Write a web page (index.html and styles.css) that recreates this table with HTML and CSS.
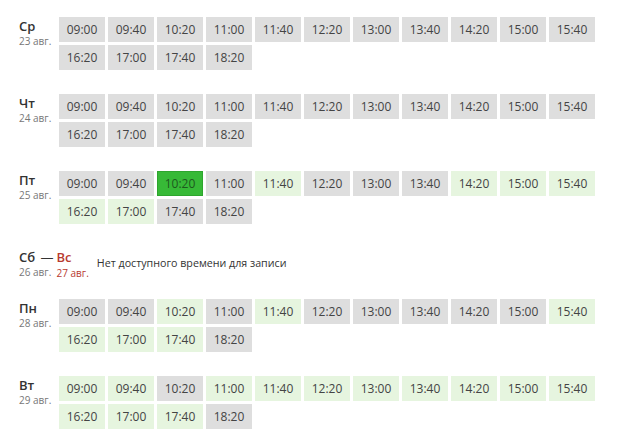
FILE: index.html
```html
<!DOCTYPE html>
<html lang="ru">
<head>
<meta charset="utf-8">
<link rel="stylesheet" href="styles.css">
</head>
<body>
<div class="schedule">
  <div class="day">
    <div class="label"><div class="dname">Ср</div><div class="ddate">23 авг.</div></div>
    <div class="slots">
      <div class="slot">09:00</div><div class="slot">09:40</div><div class="slot">10:20</div><div class="slot">11:00</div><div class="slot">11:40</div><div class="slot">12:20</div><div class="slot">13:00</div><div class="slot">13:40</div><div class="slot">14:20</div><div class="slot">15:00</div><div class="slot">15:40</div>
      <div class="slot">16:20</div><div class="slot">17:00</div><div class="slot">17:40</div><div class="slot">18:20</div>
    </div>
  </div>
  <div class="day">
    <div class="label"><div class="dname">Чт</div><div class="ddate">24 авг.</div></div>
    <div class="slots">
      <div class="slot">09:00</div><div class="slot">09:40</div><div class="slot">10:20</div><div class="slot">11:00</div><div class="slot">11:40</div><div class="slot">12:20</div><div class="slot">13:00</div><div class="slot">13:40</div><div class="slot">14:20</div><div class="slot">15:00</div><div class="slot">15:40</div>
      <div class="slot">16:20</div><div class="slot">17:00</div><div class="slot">17:40</div><div class="slot">18:20</div>
    </div>
  </div>
  <div class="day">
    <div class="label"><div class="dname">Пт</div><div class="ddate">25 авг.</div></div>
    <div class="slots">
      <div class="slot">09:00</div><div class="slot">09:40</div><div class="slot selected">10:20</div><div class="slot">11:00</div><div class="slot free">11:40</div><div class="slot">12:20</div><div class="slot">13:00</div><div class="slot">13:40</div><div class="slot free">14:20</div><div class="slot free">15:00</div><div class="slot free">15:40</div>
      <div class="slot free">16:20</div><div class="slot free">17:00</div><div class="slot">17:40</div><div class="slot">18:20</div>
    </div>
  </div>
  <div class="day weekend">
    <div class="label wk">
      <div class="wkday"><div class="dname">Сб <span class="dash">—</span></div><div class="ddate">26 авг.</div></div>
      <div class="wkday red"><div class="dname">Вс</div><div class="ddate">27 авг.</div></div>
    </div>
    <div class="none">Нет доступного времени для записи</div>
  </div>
  <div class="day">
    <div class="label"><div class="dname">Пн</div><div class="ddate">28 авг.</div></div>
    <div class="slots">
      <div class="slot">09:00</div><div class="slot">09:40</div><div class="slot free">10:20</div><div class="slot">11:00</div><div class="slot free">11:40</div><div class="slot">12:20</div><div class="slot">13:00</div><div class="slot">13:40</div><div class="slot">14:20</div><div class="slot">15:00</div><div class="slot free">15:40</div>
      <div class="slot free">16:20</div><div class="slot free">17:00</div><div class="slot free">17:40</div><div class="slot">18:20</div>
    </div>
  </div>
  <div class="day">
    <div class="label"><div class="dname">Вт</div><div class="ddate">29 авг.</div></div>
    <div class="slots">
      <div class="slot free">09:00</div><div class="slot free">09:40</div><div class="slot">10:20</div><div class="slot free">11:00</div><div class="slot free">11:40</div><div class="slot free">12:20</div><div class="slot free">13:00</div><div class="slot free">13:40</div><div class="slot free">14:20</div><div class="slot free">15:00</div><div class="slot free">15:40</div>
      <div class="slot free">16:20</div><div class="slot free">17:00</div><div class="slot free">17:40</div><div class="slot">18:20</div>
    </div>
  </div>
</div>
</body>
</html>
```
FILE: styles.css
```css
html, body {
  margin: 0;
  padding: 0;
  background: #fff;
}
body {
  font-family: "Open Sans", "Noto Sans", sans-serif;
  color: #444;
}
.schedule {
  padding-top: 17px;
}
.day {
  display: flex;
  margin-bottom: 24px;
}
.label {
  width: 40px;
  padding-left: 19px;
  padding-top: 1px;
}
.dname {
  font-size: 13px;
  font-weight: 600;
  line-height: 16px;
  color: #333;
  white-space: nowrap;
}
.ddate {
  font-size: 10px;
  line-height: 14px;
  color: #777;
  white-space: nowrap;
}
.slots {
  display: grid;
  grid-template-columns: repeat(11, 46px);
  grid-auto-rows: 25px;
  gap: 3px;
}
.slot {
  background: #dedede;
  font-size: 12px;
  line-height: 25px;
  text-align: center;
  color: #444;
}
.slot.free {
  background: #e6f5df;
}
.slot.selected {
  background: #37b937;
  box-shadow: inset 0 0 0 1px #2ea52e;
  color: #1e5a1e;
}
.weekend {
  height: 27px;
}
.wk {
  display: flex;
  gap: 3px;
  width: auto;
  padding-right: 8px;
}
.dash {
  font-weight: 400;
  margin-left: 2px;
}
.red .dname, .red .ddate {
  color: #b83a30;
}
.red .ddate {
  padding-top: 1px;
}
.none {
  font-size: 10.7px;
  color: #333;
  padding-top: 8px;
}
```
